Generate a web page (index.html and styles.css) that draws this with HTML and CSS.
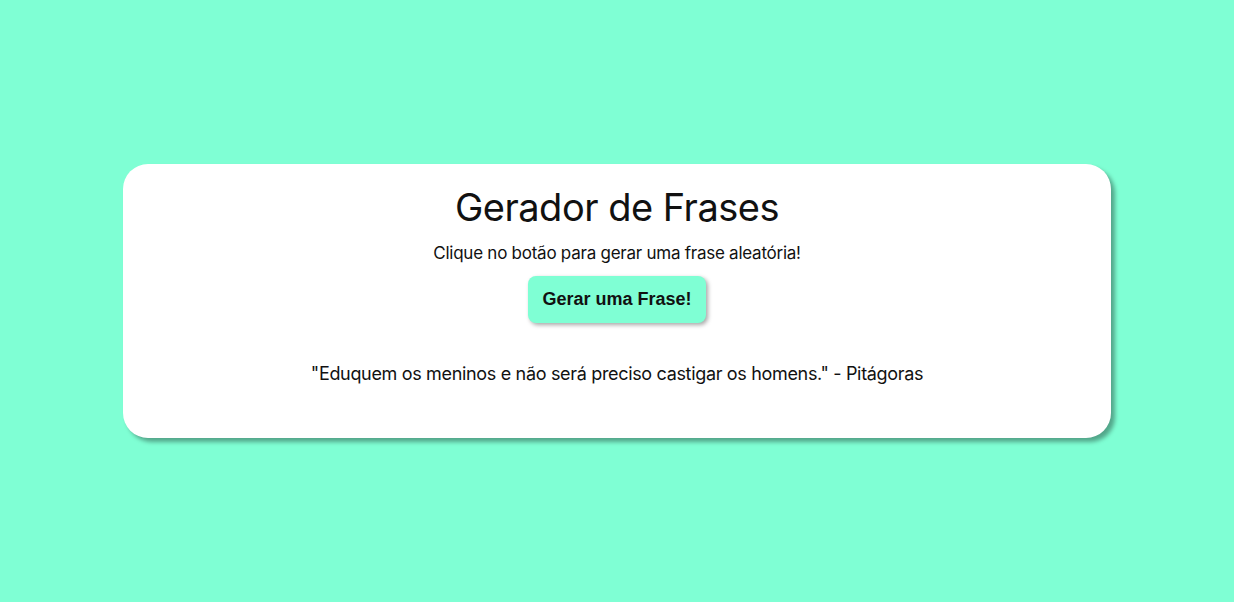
FILE: index.html
```html
<!DOCTYPE html>
<html lang="pt-BR">
<head>
<meta charset="UTF-8">
<title>Gerador de Frases</title>
<link rel="stylesheet" href="styles.css">
</head>
<body>
<main class="page">
  <section class="card">
    <h1 class="title">Gerador de Frases</h1>
    <p class="subtitle">Clique no botão para gerar uma frase aleatória!</p>
    <button class="btn" type="button">Gerar uma Frase!</button>
    <p class="quote">"Eduquem os meninos e não será preciso castigar os homens." - Pitágoras</p>
  </section>
</main>
</body>
</html>
```
FILE: styles.css
```css
html, body {
  margin: 0;
  padding: 0;
  height: 100%;
}
body {
  background: #7fffd4;
  font-family: Inter, "Liberation Sans", sans-serif;
  color: #111;
}
.page {
  height: 100%;
  display: flex;
  align-items: center;
  justify-content: center;
}
.card {
  width: 80%;
  height: 274px;
  box-sizing: border-box;
  background: #fff;
  border-radius: 25px;
  box-shadow: 4px 4px 4px rgba(0,0,0,0.35);
  display: flex;
  flex-direction: column;
  align-items: center;
  padding-top: 20px;
}
.title {
  font-size: 38px;
  font-weight: 400;
  margin: 0;
  line-height: 46px;
  letter-spacing: -0.5px;
}
.subtitle {
  font-size: 17px;
  margin: 12px 0 0;
  line-height: 22px;
  letter-spacing: -0.25px;
}
.btn {
  margin-top: 12px;
  font-family: "Liberation Sans", Arial, sans-serif;
  font-weight: 700;
  font-size: 18px;
  color: #111;
  background: #7fffd4;
  border: none;
  border-radius: 8px;
  padding: 0;
  height: 47px;
  width: 178px;
  box-shadow: 2px 2px 4px rgba(0,0,0,0.35);
}
.quote {
  font-size: 18px;
  margin: 39px 0 0;
  line-height: 24px;
  letter-spacing: -0.33px;
}
```
